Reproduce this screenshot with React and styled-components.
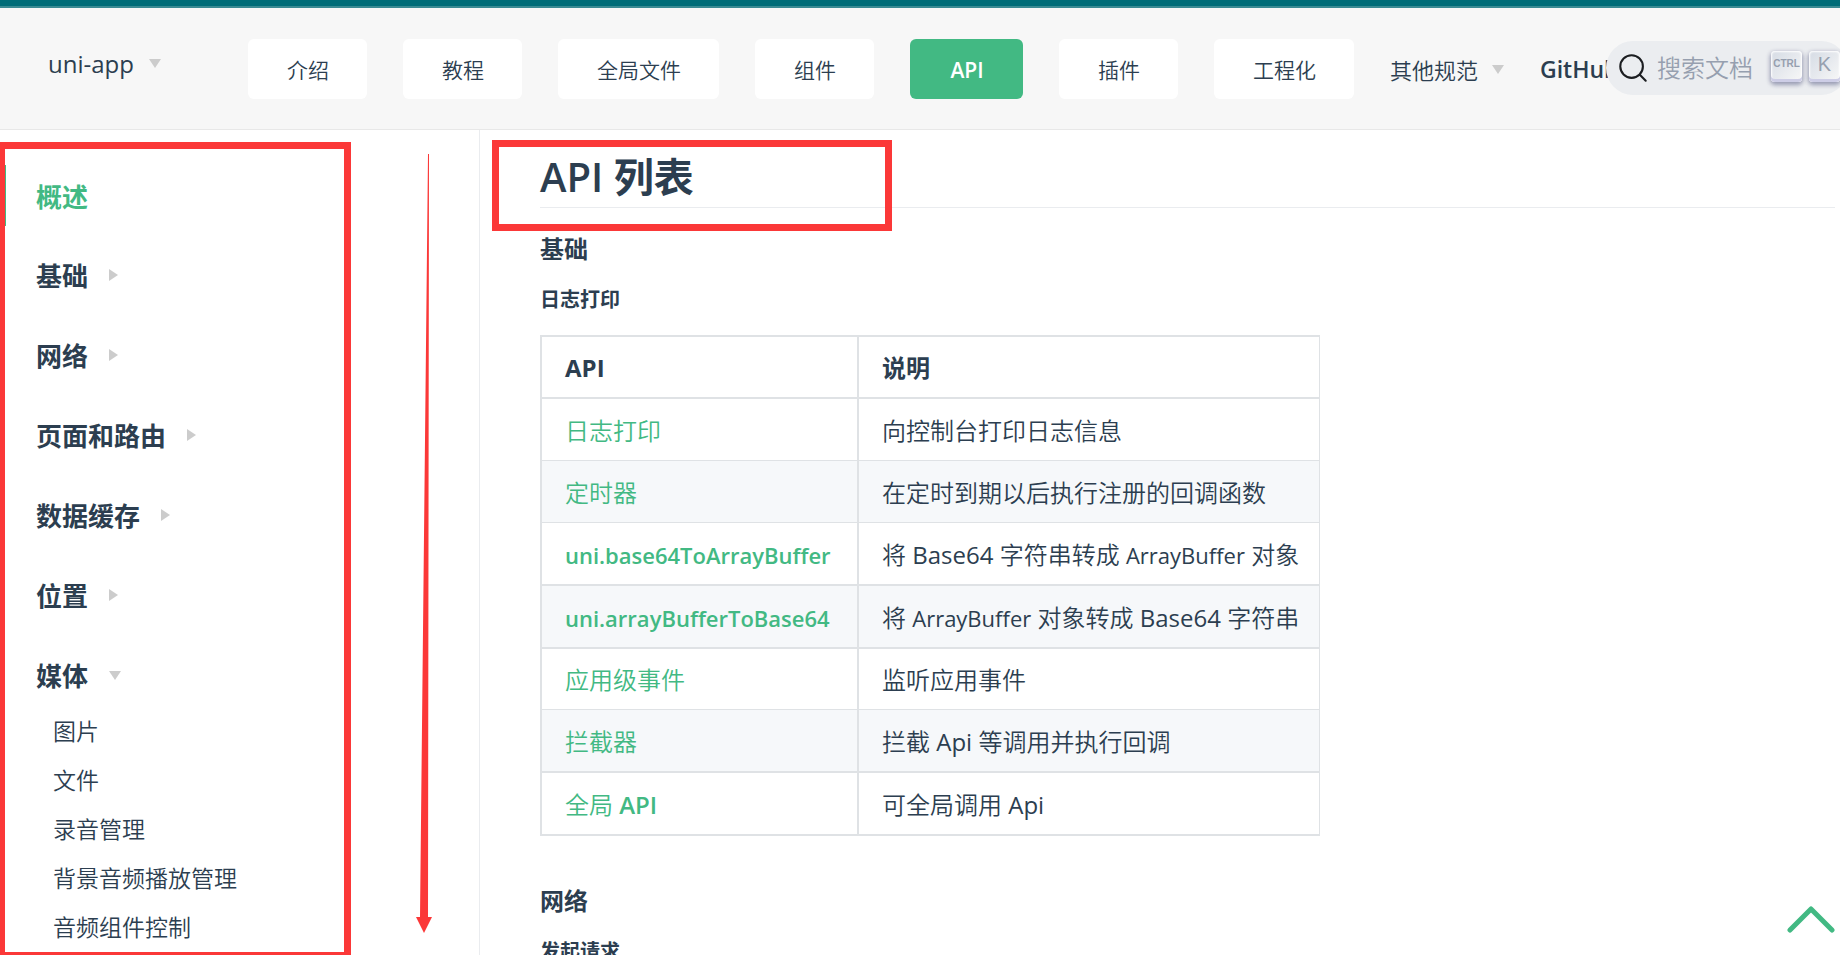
import React from "react";
import styled, { createGlobalStyle, css } from "styled-components";

const ink = "#2c3e50";
const green = "#42b983";
const red = "#fb3838";
const rule = "#dfe2e5";

const GlobalStyle = createGlobalStyle`
  *, *::before, *::after { box-sizing: border-box; }
  body {
    margin: 0;
    background: #fff;
    color: ${ink};
    font-family: "Open Sans", "Noto Sans CJK SC", sans-serif;
    font-size: 24px;
    font-weight: 350;
    overflow: hidden;
  }
  h1, h2, h3, p, ul { margin: 0; padding: 0; }
  ul { list-style: none; }
  a { color: inherit; text-decoration: none; }
  button { border: 0; padding: 0; background: none; color: inherit; font: inherit; cursor: pointer; }
`;

const Page = styled.div`
  height: 100vh;
  display: flex;
  flex-direction: column;
  overflow: hidden;
`;

const Strip = styled.div`
  flex: none;
  height: 8px;
  background: #006d78;
  border-bottom: 2px solid #3a8b93;
`;

const Header = styled.header`
  flex: none;
  height: 122px;
  display: flex;
  align-items: flex-start;
  padding: 31px 0 0 48px;
  background: #f7f7f7;
  border-bottom: 1px solid #e8e8e8;
  white-space: nowrap;
  overflow: hidden;
`;

const Caret = styled.span`
  flex: none;
  width: 0;
  height: 0;
  margin-left: ${(p) => p.$gap || 21}px;
  ${(p) =>
    p.$down
      ? css`
          border-left: 6px solid transparent;
          border-right: 6px solid transparent;
          border-top: 9px solid #ccc;
        `
      : css`
          border-top: 6px solid transparent;
          border-bottom: 6px solid transparent;
          border-left: 9px solid #ccc;
        `}
`;

const Brand = styled.button`
  display: flex;
  align-items: center;
  width: 200px;
  height: 49px;
  font-weight: 500;
`;

const Nav = styled.nav`
  display: flex;
  gap: 36px;
`;

const Tab = styled.a`
  min-width: 113px;
  height: 60px;
  padding: 0 38px 0 39px;
  border-radius: 6px;
  background: ${(p) => (p.$active ? green : "#fff")};
  color: ${(p) => (p.$active ? "#fff" : ink)};
  font-size: 21px;
  font-weight: ${(p) => (p.$active ? 600 : 350)};
  line-height: 62px;
  text-align: center;
`;

const PlainItem = styled.button`
  display: flex;
  align-items: center;
  height: 60px;
  font-size: 22px;
`;

const GitHub = styled.a`
  flex: none;
  height: 60px;
  line-height: 60px;
  font-size: 23px;
  font-weight: 600;
`;

const Search = styled.button`
  position: absolute;
  top: 41px;
  right: -8px;
  display: flex;
  align-items: center;
  height: 54px;
  padding: 0 8px 0 12px;
  border-radius: 27px;
  background: #ebedf0;
  color: #969faf;
  line-height: 56px;
  white-space: nowrap;

  svg { margin-right: 9px; }
`;

const Keys = styled.span`
  display: flex;
  gap: 7px;
  margin-left: 18px;
`;

const Key = styled.kbd`
  display: flex;
  align-items: center;
  justify-content: center;
  width: 31px;
  height: 31px;
  margin-bottom: 4px;
  padding-bottom: 4px;
  border-radius: 4px;
  background: linear-gradient(-225deg, #d5dbe4, #f8f8f8);
  box-shadow: inset 0 -3px 0 0 #cdcde6, inset 0 0 2px 1px #fff, 0 2px 4px 1px rgba(30, 35, 90, 0.4);
  font-family: "Liberation Sans Narrow", "Liberation Sans", sans-serif;
  font-size: ${(p) => (p.$word ? 10 : 20)}px;
  font-weight: ${(p) => (p.$word ? 700 : 400)};
  line-height: 1;
`;

const Body = styled.div`
  flex: 1;
  min-height: 0;
  display: flex;
`;

const Sidebar = styled.aside`
  position: relative;
  flex: none;
  width: 480px;
  padding-top: 25px;
  border-right: 1px solid #eaecef;
`;

const Group = styled.a`
  display: flex;
  align-items: center;
  height: 80px;
  padding-left: 36px;
  font-size: 26px;
  font-weight: 700;
`;

const Current = styled(Group)`
  height: 61px;
  margin: 10px 0 9px;
  padding-left: 30px;
  border-left: 6px solid ${green};
  color: ${green};
`;

const SubList = styled.ul`
  margin-top: -8px;
`;

const SubItem = styled.a`
  display: block;
  padding-left: 53px;
  font-size: 23px;
  line-height: 49px;
`;

const SidebarFrame = styled.div`
  position: absolute;
  top: 12px;
  bottom: 0;
  left: 0;
  width: 351px;
  border: solid ${red};
  border-width: 7px 7px 3px 5px;
  pointer-events: none;
`;

const LongArrow = styled.svg`
  position: absolute;
  top: 24px;
  left: 416px;
`;

const Main = styled.main`
  flex: 1;
  min-width: 0;
  padding: 0 5px 0 60px;
`;

const Title = styled.h1`
  position: relative;
  height: 78px;
  padding-top: 19px;
  border-bottom: 1px solid #eaecef;
  font-size: 40px;
  font-weight: 600;
  line-height: 56px;
`;

const TitleFrame = styled.span`
  position: absolute;
  top: 10px;
  left: -48px;
  width: 400px;
  height: 91px;
  border: 7px solid ${red};
  pointer-events: none;
`;

const Section = styled.h2`
  margin-top: ${(p) => (p.$first ? 23 : 47)}px;
  font-size: 24px;
  font-weight: 700;
  line-height: 36px;
`;

const Topic = styled.h3`
  margin-top: 18px;
  font-size: 20px;
  font-weight: 700;
  line-height: 30px;
`;

const Table = styled.table`
  width: 780px;
  margin-top: 20px;
  table-layout: fixed;
  border: solid ${rule};
  border-width: 0 1px 2px 0;
  border-collapse: separate;
  border-spacing: 0;
`;

const Row = styled.tr`
  height: 62px;
  background: ${(p) => (p.$shade ? "#f6f8fa" : "#fff")};
  tbody &:nth-child(3n + 1) { height: 63px; }
  th, td { border-top-width: ${(p) => (p.$thin ? 1 : 2)}px; }
`;

const cell = css`
  padding: 2px 0 0 23px;
  border: 0 solid ${rule};
  border-left-width: 2px;
  text-align: left;
  line-height: 36px;
  white-space: nowrap;
`;

const Head = styled.th`
  ${cell}
  width: ${(p) => p.$width || "auto"};
  font-weight: 700;
`;

const Cell = styled.td`
  ${cell}
`;

const ApiLink = styled.a`
  color: ${green};
`;

const Latin = styled.span`
  font-size: ${(p) => (p.$long ? 22 : 24)}px;
  font-weight: ${(p) => (p.$strong ? 600 : 400)};
`;

const Top = styled.button`
  position: fixed;
  right: 5px;
  bottom: 22px;
  line-height: 0;
`;

const tabs = ["介绍", "教程", "全局文件", "组件", "API", "插件", "工程化"];
const groups = ["基础", "网络", "页面和路由", "数据缓存", "位置"];
const media = ["图片", "文件", "录音管理", "背景音频播放管理", "音频组件控制"];
const rows = [
  { api: "日志打印", text: "向控制台打印日志信息" },
  { api: "定时器", text: "在定时到期以后执行注册的回调函数", thin: true },
  { api: "uni.base64ToArrayBuffer", text: "将 Base64 字符串转成 ArrayBuffer 对象", thin: true },
  { api: "uni.arrayBufferToBase64", text: "将 ArrayBuffer 对象转成 Base64 字符串" },
  { api: "应用级事件", text: "监听应用事件" },
  { api: "拦截器", text: "拦截 Api 等调用并执行回调", thin: true },
  { api: "全局 API", text: "可全局调用 Api" },
];

// Latin words carry their own weight inside the lighter Chinese text.
function Mixed({ children, strong }) {
  return children.split(/([A-Za-z][\w.]*)/).map((part, i) =>
    i % 2 ? (
      <Latin key={i} $strong={strong} $long={part.length > 6}>{part}</Latin>
    ) : (
      part
    )
  );
}

export default function App() {
  return (
    <Page>
      <GlobalStyle />
      <Strip />
      <Header>
        <Brand>
          uni-app
          <Caret $down $gap={15} />
        </Brand>
        <Nav>
          {tabs.map((t) => (
            <Tab key={t} href="#nav" $active={t === "API"}>{t}</Tab>
          ))}
          <PlainItem>
            其他规范
            <Caret $down $gap={14} />
          </PlainItem>
          <GitHub href="#github">GitHub</GitHub>
        </Nav>
        <Search aria-label="搜索文档">
          <svg width="30" height="30" viewBox="0 0 20 20" fill="none" stroke="#1c1e21" strokeWidth="1.4" strokeLinecap="round" strokeLinejoin="round">
            <path d="M14.386 14.386l4.0877 4.0877-4.0877-4.0877c-2.9418 2.9419-7.7115 2.9419-10.6533 0-2.9419-2.9418-2.9419-7.7115 0-10.6533 2.9418-2.9419 7.7115-2.9419 10.6533 0 2.9419 2.9418 2.9419 7.7115 0 10.6533z" />
          </svg>
          搜索文档
          <Keys>
            <Key $word>CTRL</Key>
            <Key>K</Key>
          </Keys>
        </Search>
      </Header>
      <Body>
        <Sidebar>
          <Current href="#overview">概述</Current>
          {groups.map((g) => (
            <Group key={g} href="#group">
              {g}
              <Caret />
            </Group>
          ))}
          <Group href="#media">
            媒体
            <Caret $down />
          </Group>
          <SubList>
            {media.map((m) => (
              <li key={m}><SubItem href="#item">{m}</SubItem></li>
            ))}
          </SubList>
          <SidebarFrame />
          <LongArrow width="17" height="779" viewBox="0 0 17 779" fill={red}>
            <path d="M12 0H13L12 763H16L8 779L0 763H4Z" />
          </LongArrow>
        </Sidebar>
        <Main>
          <Title>
            API 列表
            <TitleFrame />
          </Title>
          <Section $first>基础</Section>
          <Topic>日志打印</Topic>
          <Table>
            <thead>
              <Row>
                <Head $width="317px">API</Head>
                <Head>说明</Head>
              </Row>
            </thead>
            <tbody>
              {rows.map((r, i) => (
                <Row key={r.api} $shade={i % 2 === 1} $thin={r.thin}>
                  <Cell><ApiLink href="#api"><Mixed strong>{r.api}</Mixed></ApiLink></Cell>
                  <Cell><Mixed>{r.text}</Mixed></Cell>
                </Row>
              ))}
            </tbody>
          </Table>
          <Section>网络</Section>
          <Topic>发起请求</Topic>
        </Main>
      </Body>
      <Top aria-label="Top">
        <svg width="48" height="28" viewBox="0 0 48 28" fill="none" stroke={green} strokeWidth="5" strokeLinecap="round" strokeLinejoin="round">
          <path d="M3 25L24 4L45 25" />
        </svg>
      </Top>
    </Page>
  );
}
